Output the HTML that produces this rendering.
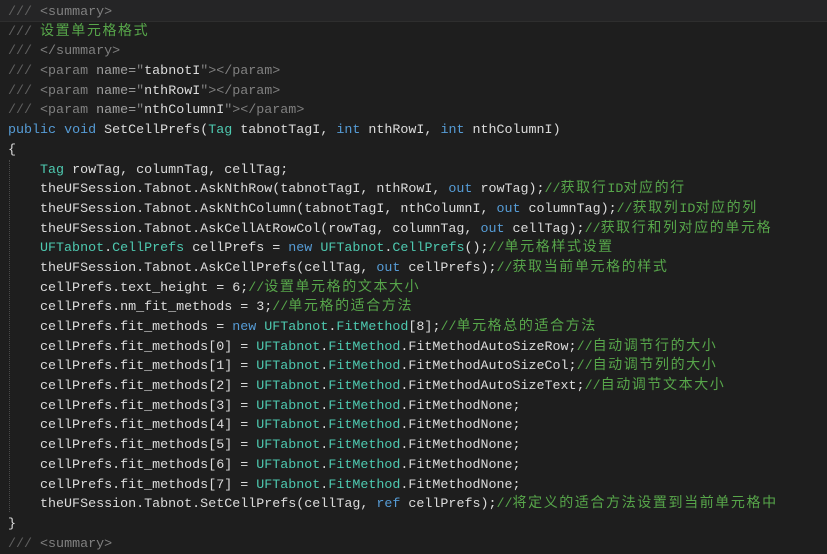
<!DOCTYPE html>
<html><head><meta charset="utf-8"><style>
html,body{margin:0;padding:0;width:827px;height:541px;overflow:hidden;background:#1e1e1e;}
.top{position:absolute;left:0;top:0;width:827px;height:21px;background:#252526;border-bottom:1px solid #2e2e2e;}
.guide{position:absolute;left:9px;top:160px;height:352px;border-left:1px dotted #4a4a4a;}
pre{position:absolute;left:8px;top:3px;margin:0;font-family:"Liberation Mono","Noto Sans CJK SC",monospace;font-size:13.35px;line-height:19.68px;color:#dcdcdc;white-space:pre;}
.c{color:#57a64a}.g{color:#606060}.x{color:#808080}.k{color:#569cd6}.t{color:#4ec9b0}
.z{font-family:"Noto Sans CJK SC","WenQuanYi Zen Hei",sans-serif;font-size:14px;letter-spacing:1.6px;line-height:0;}
</style></head><body>
<div class="top"></div>
<div class="guide"></div>
<pre><span class="g">///</span> <span class="x">&lt;summary&gt;</span>
<span class="g">///</span> <span class="c z">设置单元格格式</span>
<span class="g">///</span> <span class="x">&lt;/summary&gt;</span>
<span class="g">///</span> <span class="x">&lt;param</span> <span style="color:#a0a0a0">name=</span><span class="x">"</span>tabnotI<span class="x">"&gt;&lt;/param&gt;</span>
<span class="g">///</span> <span class="x">&lt;param</span> <span style="color:#a0a0a0">name=</span><span class="x">"</span>nthRowI<span class="x">"&gt;&lt;/param&gt;</span>
<span class="g">///</span> <span class="x">&lt;param</span> <span style="color:#a0a0a0">name=</span><span class="x">"</span>nthColumnI<span class="x">"&gt;&lt;/param&gt;</span>
<span class="k">public</span> <span class="k">void</span> SetCellPrefs(<span class="t">Tag</span> tabnotTagI, <span class="k">int</span> nthRowI, <span class="k">int</span> nthColumnI)
{
    <span class="t">Tag</span> rowTag, columnTag, cellTag;
    theUFSession.Tabnot.AskNthRow(tabnotTagI, nthRowI, <span class="k">out</span> rowTag);<span class="c">//<span class="z">获取行</span>ID<span class="z">对应的行</span></span>
    theUFSession.Tabnot.AskNthColumn(tabnotTagI, nthColumnI, <span class="k">out</span> columnTag);<span class="c">//<span class="z">获取列</span>ID<span class="z">对应的列</span></span>
    theUFSession.Tabnot.AskCellAtRowCol(rowTag, columnTag, <span class="k">out</span> cellTag);<span class="c">//<span class="z">获取行和列对应的单元格</span></span>
    <span class="t">UFTabnot</span>.<span class="t">CellPrefs</span> cellPrefs = <span class="k">new</span> <span class="t">UFTabnot</span>.<span class="t">CellPrefs</span>();<span class="c">//<span class="z">单元格样式设置</span></span>
    theUFSession.Tabnot.AskCellPrefs(cellTag, <span class="k">out</span> cellPrefs);<span class="c">//<span class="z">获取当前单元格的样式</span></span>
    cellPrefs.text_height = 6;<span class="c">//<span class="z">设置单元格的文本大小</span></span>
    cellPrefs.nm_fit_methods = 3;<span class="c">//<span class="z">单元格的适合方法</span></span>
    cellPrefs.fit_methods = <span class="k">new</span> <span class="t">UFTabnot</span>.<span class="t">FitMethod</span>[8];<span class="c">//<span class="z">单元格总的适合方法</span></span>
    cellPrefs.fit_methods[0] = <span class="t">UFTabnot</span>.<span class="t">FitMethod</span>.FitMethodAutoSizeRow;<span class="c">//<span class="z">自动调节行的大小</span></span>
    cellPrefs.fit_methods[1] = <span class="t">UFTabnot</span>.<span class="t">FitMethod</span>.FitMethodAutoSizeCol;<span class="c">//<span class="z">自动调节列的大小</span></span>
    cellPrefs.fit_methods[2] = <span class="t">UFTabnot</span>.<span class="t">FitMethod</span>.FitMethodAutoSizeText;<span class="c">//<span class="z">自动调节文本大小</span></span>
    cellPrefs.fit_methods[3] = <span class="t">UFTabnot</span>.<span class="t">FitMethod</span>.FitMethodNone;
    cellPrefs.fit_methods[4] = <span class="t">UFTabnot</span>.<span class="t">FitMethod</span>.FitMethodNone;
    cellPrefs.fit_methods[5] = <span class="t">UFTabnot</span>.<span class="t">FitMethod</span>.FitMethodNone;
    cellPrefs.fit_methods[6] = <span class="t">UFTabnot</span>.<span class="t">FitMethod</span>.FitMethodNone;
    cellPrefs.fit_methods[7] = <span class="t">UFTabnot</span>.<span class="t">FitMethod</span>.FitMethodNone;
    theUFSession.Tabnot.SetCellPrefs(cellTag, <span class="k">ref</span> cellPrefs);<span class="c">//<span class="z">将定义的适合方法设置到当前单元格中</span></span>
}
<span class="g">///</span> <span class="x">&lt;summary&gt;</span></pre>
</body></html>
